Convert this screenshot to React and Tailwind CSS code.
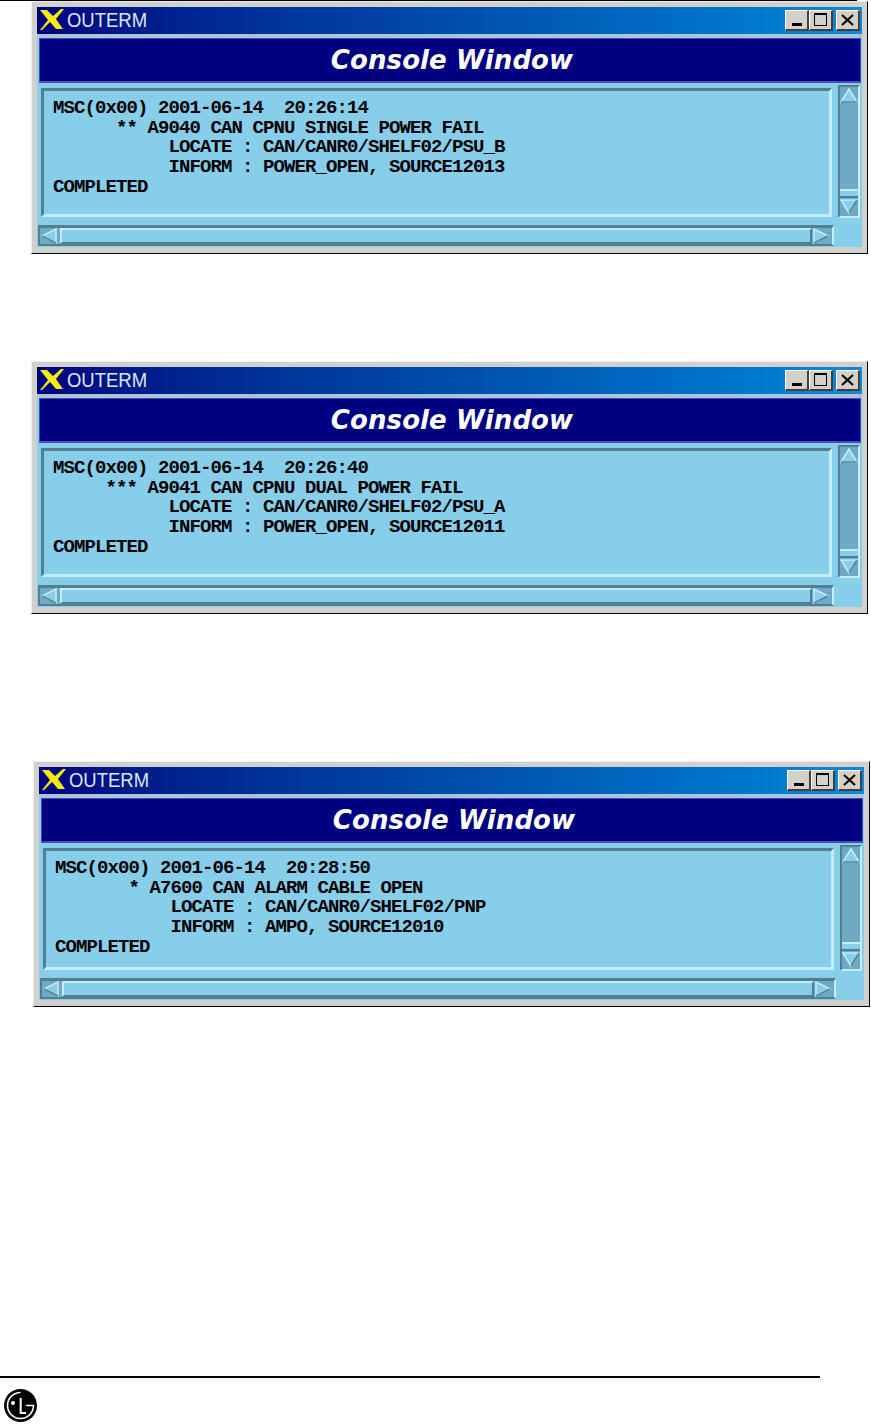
const mono = "font-['Liberation_Mono',monospace]";

function Arrow({ dir, className = "" }) {
  const pts = {
    up: "2,15 10,2 18,15",
    down: "2,2 10,15 18,2",
    left: "16,1 2,8 16,15",
    right: "2,1 16,8 2,15",
  }[dir];
  const dark = {
    up: "2,15 18,15",
    down: "10,15 18,2",
    left: "2,8 16,15",
    right: "16,8 2,15",
  }[dir];
  return (
    <svg width="20" height="17" viewBox="0 0 20 17" className={className}>
      <polygon points={pts} fill="#87ceeb" stroke="#c4ecfb" strokeWidth="1.5" />
      <polyline points={dark} fill="none" stroke="#4f7f90" strokeWidth="1.5" />
    </svg>
  );
}

function TitleButton({ children }) {
  return (
    <div className="w-[24px] h-[21px] bg-[#d4d0c8] border-t border-l border-t-white border-l-white border-r-2 border-b-2 border-r-[#404040] border-b-[#404040] flex items-center justify-center">
      {children}
    </div>
  );
}

function Window({ lines, frameH, className = "" }) {
  return (
    <div className={`w-[837px] bg-[#d0d0cc] border-t border-l border-t-[#eeeeee] border-l-[#eeeeee] border-r border-b border-r-black border-b-black p-[5px] pb-[6px] ${className}`}>
      <div className="h-[27px] bg-gradient-to-r from-[#000080] to-[#1288d8] flex items-center justify-between pl-[3px] pr-[2px]">
        <div className="flex items-center gap-[3px]">
          <svg width="24" height="21" viewBox="0 0 24 21" className="-mt-[2px]">
            <path d="M0 1 L7 1 L13 7 L21 0 L24 0 L16 10 L23 20 L16 20 L10 13 L2 21 L0 21 L8 11 Z" fill="#f2ea10" />
          </svg>
          <span className="font-['Liberation_Sans',sans-serif] text-[21px] leading-none text-[#dfe6ee] scale-x-[0.88] origin-left -mt-[2px]">OUTERM</span>
        </div>
        <div className="flex items-center -mt-[1px]">
          <TitleButton><div className="w-[10px] h-[3px] bg-black mt-[9px]" /></TitleButton>
          <TitleButton><div className="w-[13px] h-[13px] border border-black border-t-2" /></TitleButton>
          <div className="w-[3px]" />
          <TitleButton>
            <svg width="13" height="12" viewBox="0 0 13 12"><path d="M1 1 L12 11 M12 1 L1 11" stroke="#000" strokeWidth="2" /></svg>
          </TitleButton>
        </div>
      </div>
      <div className="h-[4px] bg-[#a9c6d8]" />
      <div className="bg-[#87ceeb] pb-[1px]">
        <div className="ml-[2px] mr-[1px] h-[45px] bg-[#000080] border border-[#4a4ab0] border-b-2 flex items-center justify-center pl-[4px]">
          <span className="font-['DejaVu_Sans',sans-serif] font-bold italic text-[26px] leading-none text-white tracking-[0.1px]">Console Window</span>
        </div>
        <div className="flex justify-between pl-[4px] pr-[2px] pt-[5px]">
          <div className="w-[791px] flex flex-col">
            <div
              style={{ height: frameH }}
              className={`border-t-[3px] border-l-[3px] border-t-[#4f7f90] border-l-[#4f7f90] border-b-[3px] border-r-[3px] border-b-[#c4ecfb] border-r-[#c4ecfb] pl-[9px] pt-[8px] ${mono}`}
            >
              {lines.map((l, i) => (
                <div key={i} className="whitespace-pre font-bold text-[19px] tracking-[-0.9px] leading-[19.7px] text-black">{l}</div>
              ))}
            </div>
            <div className="mt-[8px] -ml-[3px] w-[796px] h-[21px] bg-[#6fa9c4] border-t-[3px] border-l-[2px] border-t-[#4f7f90] border-l-[#4f7f90] border-b-2 border-r-2 border-b-[#4f7f90] border-r-[#c4ecfb] flex items-center">
              <Arrow dir="left" className="shrink-0" />
              <div className="flex-1 h-full bg-[#87ceeb] border-t-2 border-l-2 border-t-[#c4ecfb] border-l-[#c4ecfb] border-b-2 border-r-2 border-b-[#4f7f90] border-r-[#4f7f90]" />
              <Arrow dir="right" className="shrink-0" />
            </div>
          </div>
          <div
            style={{ height: frameH + 4 }}
            className="-mt-[3px] w-[22px] bg-[#6fa9c4] border-l-2 border-t-2 border-l-[#4f7f90] border-t-[#4f7f90] border-r-2 border-b-2 border-r-[#c4ecfb] border-b-[#c4ecfb] flex flex-col items-center"
          >
            <Arrow dir="up" className="shrink-0" />
            <div className="flex-1 w-full" />
            <div className="w-full h-[9px] bg-[#87ceeb] border-t-2 border-t-[#c4ecfb] border-b-2 border-b-[#4f7f90] shrink-0" />
            <Arrow dir="down" className="shrink-0 mb-[1px]" />
          </div>
        </div>
      </div>
    </div>
  );
}

export default function App() {
  return (
    <div className="h-[1425px] w-[871px] bg-white overflow-hidden flex flex-col">
      <div className="h-px w-[857px] bg-black shrink-0" />
      <Window
        className="ml-[31px]"
        frameH={129}
        lines={[
          "MSC(0x00) 2001-06-14  20:26:14",
          "      ** A9040 CAN CPNU SINGLE POWER FAIL",
          "           LOCATE : CAN/CANR0/SHELF02/PSU_B",
          "           INFORM : POWER_OPEN, SOURCE12013",
          "COMPLETED",
        ]}
      />
      <Window
        className="ml-[31px] mt-[107px]"
        frameH={129}
        lines={[
          "MSC(0x00) 2001-06-14  20:26:40",
          "     *** A9041 CAN CPNU DUAL POWER FAIL",
          "           LOCATE : CAN/CANR0/SHELF02/PSU_A",
          "           INFORM : POWER_OPEN, SOURCE12011",
          "COMPLETED",
        ]}
      />
      <Window
        className="ml-[33px] mt-[147px]"
        frameH={122}
        lines={[
          "MSC(0x00) 2001-06-14  20:28:50",
          "       * A7600 CAN ALARM CABLE OPEN",
          "           LOCATE : CAN/CANR0/SHELF02/PNP",
          "           INFORM : AMPO, SOURCE12010",
          "COMPLETED",
        ]}
      />
      <div className="mt-auto mb-[1px]">
        <div className="w-[820px] h-[2px] bg-black" />
        <svg width="36" height="36" viewBox="0 0 36 36" className="ml-[3px] mt-[10px] block">
          <circle cx="17.5" cy="17.5" r="16.5" fill="#000" />
          <path d="M17.5 4.5 A13 13 0 1 0 30.5 17.5 H23" fill="none" stroke="#fff" strokeWidth="1.6" />
          <circle cx="10" cy="15" r="2" fill="#fff" />
          <path d="M17.7 10 V25 H23" fill="none" stroke="#fff" strokeWidth="2" />
        </svg>
      </div>
    </div>
  );
}
